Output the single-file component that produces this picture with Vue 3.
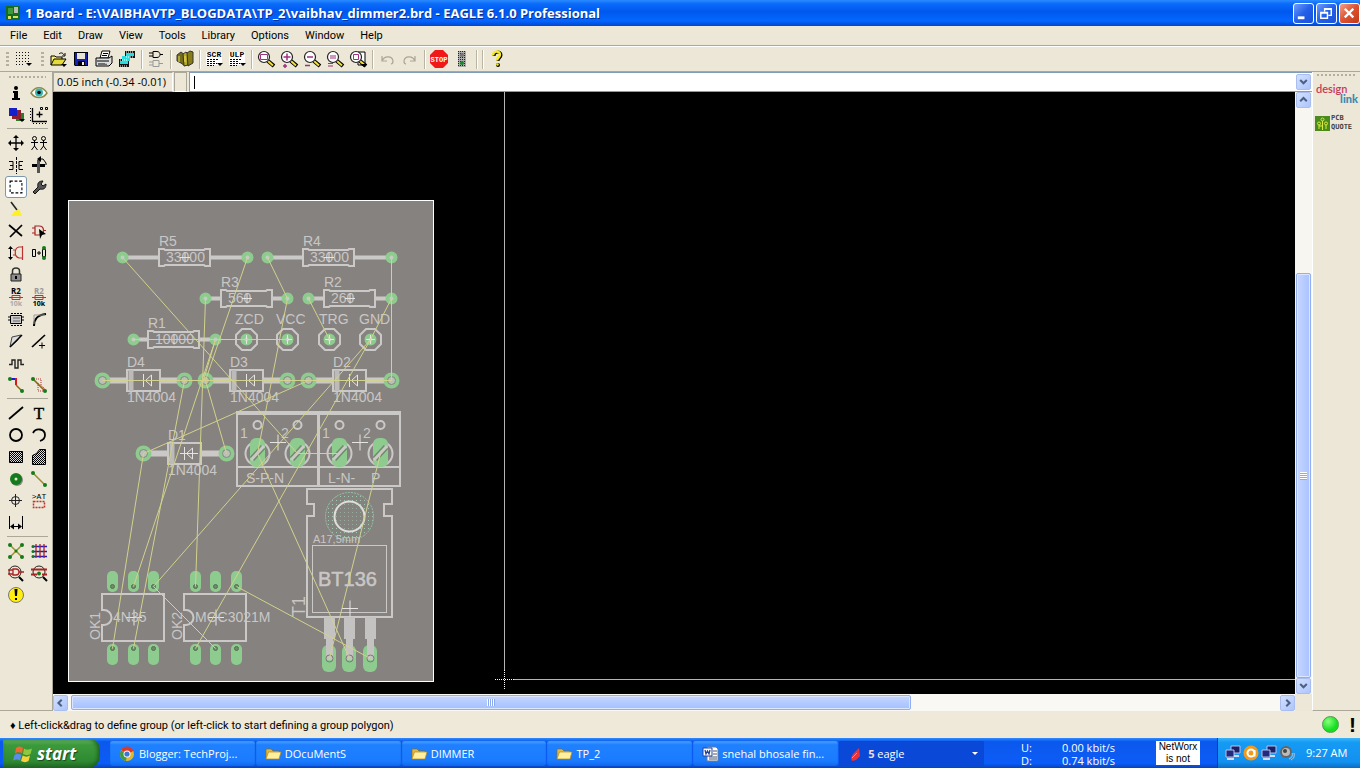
<script setup>
import { ref } from 'vue'

const command = ref('')
const menus = ['File', 'Edit', 'Draw', 'View', 'Tools', 'Library', 'Options', 'Window', 'Help']

const lens = (inner, x = 9) =>
  `<path d="M${x + 4} 13l6 5" stroke="#000" stroke-width="4"/><path d="M${x + 4} 13l5 4.500" stroke="#f3e03a" stroke-width="2"/><circle cx="${x}" cy="9" r="5.500" fill="#fff" stroke="#222" stroke-width="1.200"/>${inner}`
const page = (t) =>
  `<path d="M3 4h16v13H3z" fill="#fff"/><text x="11" y="9" font-size="8" font-weight="700" text-anchor="middle" font-family="Liberation Mono, monospace">${t}</text><path d="M4 11.500h11M4 13.500h8M4 15.500h10M4 17.500h7" stroke="#000" stroke-dasharray="2 1"/><path d="M14 15h6l-3 3z"/>`
const arc = '<path d="M6 8v5h5M6 13c2-5 10-6 11 0 0 2-1 3-2 3" fill="none" stroke="#a9a598" stroke-width="1.200"/>'
const res = (a, b) =>
  `<text x="11" y="8" font-size="8" font-weight="700" text-anchor="middle" fill="${a}">R2</text><path d="M4 11.500h14M7 9.500h8v4H7z" fill="none" stroke="#b33"/><text x="11" y="20" font-size="7" font-weight="700" text-anchor="middle" fill="${b}">10k</text>`
const ball = (x, y, r = 2) => `<circle cx="${x}" cy="${y}" r="${r}" fill="#157a1c"/>`

const art = {
  grid: '<path d="M4 4.500h14M4 7.500h14M4 10.500h14M4 13.500h14M4 16.500h9" stroke="#111" stroke-dasharray="1 2"/><path d="M14 15h6l-3 3z"/>',
  open: '<path d="M4 17V8h4l1 1h6v3" fill="#fff36b" stroke="#000"/><path d="M4 17l3-6h12l-4 6z" fill="#e5da3c" stroke="#000"/><path d="M12 6c2-2 4-1 5 1m1-2v3h-3" fill="none" stroke="#000"/><path d="M14 16h6l-3 3z"/>',
  save: '<path d="M4 4h14v14H5l-1-1z" fill="#000"/><path d="M5 5h12v12H5z" fill="#1720b0"/><path d="M7 5h8v6H7z" fill="#e8e4d4"/><path d="M8 13h7v4H8z" fill="#000"/><path d="M12 14h2v3h-2z" fill="#eee"/>',
  print: '<path d="M7 10L9 3h8l-2 7z" fill="#fff" stroke="#000"/><path d="M3 10h13l3-2v7l-3 3H3z" fill="#ddd" stroke="#000"/><path d="M10 5.500h5M9 7.500h5M4 13h12M5 16h9" stroke="#000"/><path d="M12 15h2v1h-2z" fill="#dc2"/>',
  cam: '<path d="M9 3h10v7H9zM3 11h10v8H3z" fill="#111"/><path d="M10 5h8v3h-8zM4 13h8v3H4zM6 8h8v5H6z" fill="#26dede"/><path d="M10 4h8M10 9h8M4 12h8M4 18h8" stroke="#fff" stroke-dasharray="1 1"/>',
  board: '<path d="M4 5h4M4 8h4M8 3.500h4c4 0 4 6 0 6H8zM15 6.500h3" fill="none" stroke="#000"/><path d="M8 12.500h6v6H8zM4 14h4M4 17h4M14 15.500h4" fill="none" stroke="#999"/>',
  library: '<path d="M3 7l4-3 4 3v11l-4-3-4-2z" fill="#776d18" stroke="#333"/><path d="M9 6l3-2 2 2v11l-4 1z" fill="#b7aa24" stroke="#333"/><path d="M13 5l3-2 3 1v11l-5 3z" fill="#887c18" stroke="#333"/><path d="M5 8v6m6-6v6" stroke="#e9df62"/>',
  scr: page('SCR'), ulp: page('ULP'),
  zoomfit: lens('<path d="M5.500 6.500h7v5h-7z" fill="none" stroke="#a03080"/>'),
  zoomin: lens('<path d="M9 5.500v7M5.500 9h7M5 18h4m-2-2v4" stroke="#a03080" stroke-width="1.500"/>'),
  zoomout: lens('<path d="M6 9h6M4 17.500h5" stroke="#a03080" stroke-width="1.500"/>'),
  zoomredraw: lens('<path d="M6 8h6M6 10h6M4 15.500h5M4 18h5" stroke="#a03080" stroke-width="1.200"/>'),
  zoomsel: '<path d="M11 4h7v13h-7z" fill="#fff" stroke="#000"/>' + lens('<path d="M6.500 6.500h5v5h-5z" fill="none" stroke="#a03080"/>') + '<path d="M13 16h7l-3 3z"/>',
  undo: arc,
  redo: `<g transform="translate(22 0) scale(-1 1)">${arc}</g>`,
  stop: '<path d="M7 2h8l5 5v8l-5 5H7l-5-5V7z" fill="#f01818"/><text x="11" y="14" font-size="7" font-weight="700" text-anchor="middle" fill="#fff" font-family="Liberation Mono, monospace">STOP</text>',
  traffic: '<path d="M7 3h8v16H7z" fill="#aaa"/><path d="M7.500 3v16M9.500 3v16M11.500 3v16M13.500 3v16" stroke="#222" stroke-dasharray="1 1"/><circle cx="11" cy="7" r="2" fill="#777"/><circle cx="11" cy="15" r="2" fill="#1c8a28"/>',
  help: '<path d="M8 8c0-5 7-5 7-1 0 3-3 3-3 6" fill="none" stroke="#000" stroke-width="3"/><path d="M7 7.500c0-5 7-5 7-1 0 3-3 3-3 6" fill="none" stroke="#f8ec20" stroke-width="2.500"/><circle cx="12" cy="17" r="2" fill="#000"/><circle cx="11.500" cy="16.500" r="1.300" fill="#f8ec20"/>',

  info: '<circle cx="11" cy="6" r="2"/><path d="M8 9h5v7h2v2H7v-2h2v-5H8z"/>',
  eye: '<path d="M3 11c4-7 12-7 16 0-4 6-12 6-16 0z" fill="#fff" stroke="#8b8a45" stroke-width="1.500"/><circle cx="11" cy="10.500" r="4" fill="#35b4b4"/><circle cx="11" cy="10.500" r="1.800"/>',
  layers: '<path d="M11 9h8v8h-8z" fill="#2a7c2a"/><path d="M7 6h9v9H7z" fill="#8e1f2e"/><path d="M4 4h8v8H4z" fill="#1620c8"/><path d="M14 15h6l-3 3z"/>',
  mark: '<path d="M4.500 4v13.500H19M8.500 10.500h6m-3-3v6" fill="none" stroke="#000" stroke-width="1.300"/><path d="M2.500 4v14M5 19.500h14" stroke="#000" stroke-dasharray="1 2"/><path d="M12.500 3.500h2v2h-2zM17.500 3.500h2v2h-2z" fill="none" stroke="#000"/>',
  move: '<path d="M11 4v14M4 11h14" stroke="#000" stroke-width="1.300"/><path d="M8 6l3-3 3 3zM8 16l3 3 3-3zM6 8l-3 3 3 3zM16 8l3 3-3 3z"/>',
  copy: '<g fill="none" stroke="#000"><circle cx="6.500" cy="6.500" r="2"/><circle cx="15.500" cy="6.500" r="2"/><path d="M6.500 8v6l-3 4M6.500 14l3 4M3 10.500h7M15.500 8v6l-3 4M15.500 14l3 4M12 10.500h7"/></g>',
  mirror: '<path d="M4 7.500h4v8H4M8 11.500H5M18 7.500h-4v8h4M14 11.500h3" fill="none" stroke="#000"/><path d="M11.500 3v17" stroke="#000" stroke-dasharray="3 1"/>',
  rotate: '<path d="M4 10h13v3H4z"/><path d="M9 6h3v13H9z" fill="#555"/><path d="M12 5h3l3 4v2" fill="none" stroke="#000"/><path d="M9 5l4-3v6z"/>',
  group: '<path d="M4.500 4.500h13v13h-13z" fill="none" stroke="#000" stroke-width="1.200" stroke-dasharray="3 2"/>',
  wrench: '<path d="M5 16l5-5c-1-4 1-6 5-6l-2 3 2 2 3-2c0 4-2 6-6 5l-5 5z" fill="#555" stroke="#111"/>',
  brush: '<path d="M6 4l6 8" stroke="#222" stroke-width="1.500"/><path d="M9 14l5-3 3 7H6z" fill="#ffef26"/>',
  del: '<path d="M4 5l13 11M17 5L5 17" stroke="#000" stroke-width="1.700"/>',
  add: '<path d="M7 6h4c6 0 6 9 0 9H7zM4 8h3M4 13h3M15 10.500h3" fill="none" stroke="#a22" stroke-width="1.200"/><path d="M11 9l7 5-4 1-2 4z"/>',
  pinswap: '<path d="M5.500 6v11" fill="none" stroke="#000"/><path d="M3 7l2.500-3L8 7zM3 15l2.500 3L8 15z"/><path d="M18 5h-4c-5 1-5 10 0 11h4M10 8H8M10 13H8M17.500 4v14" fill="none" stroke="#b33" stroke-width="1.200"/>',
  replace: '<path d="M4.500 7.500h3v7h-3zM14.500 7.500h3v7h-3zM9 11h4m-2-2v4" fill="none" stroke="#000"/>' + ball(16, 6) + ball(16, 16),
  lock: '<path d="M7.500 11V7c0-4 7-4 7 0v4" fill="none" stroke="#333" stroke-width="1.500"/><path d="M6 10h10v7H6z" fill="#8c8c8c" stroke="#222"/><path d="M10 12h2v3h-2z"/>',
  name: res('#000', '#aaa'), value: res('#999', '#000'),
  smash: '<path d="M5.500 7.500h11v8h-11z" fill="#ccc" stroke="#000"/><path d="M6 5.500h11M6 17.500h11M4 8v6M18 8v6" stroke="#000" stroke-dasharray="2 1"/><path d="M8 10h7M8 13h7" stroke="#666"/>',
  miter: '<path d="M6 18c0-7 3-11 12-12" fill="none" stroke="#000" stroke-width="2"/><path d="M6 16V7h11" fill="none" stroke="#999"/>',
  split: '<path d="M5 17L7 7l9-2-4 6z" fill="#ddd" stroke="#444"/><path d="M5 17L17 5" stroke="#000" stroke-width="1.500"/>',
  optimize: '<path d="M4 17L17 5" stroke="#000" stroke-width="1.700"/><path d="M11 15.500h6m-3-3v6" stroke="#000"/>',
  meander: '<path d="M4 12.500h3V8h3v8h3V8h3v4.500h3" fill="none" stroke="#222" stroke-width="1.400"/>',
  route: '<path d="M5 5h6" stroke="#1818d8" stroke-width="2"/><path d="M11 4v7" stroke="#d81818" stroke-width="2"/><path d="M11 11l6 6" stroke="#8a6a18" stroke-width="1.500"/>' + ball(5, 5) + ball(17, 17),
  ripup: '<path d="M5 5l12 12" stroke="#8a6a18" stroke-width="1.700"/><path d="M8 5h5v6l4 4M10 9v8h8" fill="none" stroke="#b33" stroke-dasharray="1 1"/>' + ball(5, 5) + ball(17, 17),
  wire: '<path d="M4 17L18 5" stroke="#000" stroke-width="1.800"/>',
  text: '<text x="11" y="17" font-size="17" text-anchor="middle" stroke="#000" stroke-width=".4" font-family="Liberation Serif, serif">T</text>',
  circle: '<circle cx="11" cy="11" r="6" fill="none" stroke="#000" stroke-width="1.800"/>',
  arc: '<path d="M5 9c3-6 12-4 12 2 0 3-2 5-5 6" fill="none" stroke="#000" stroke-width="1.800"/>',
  rect: '<path d="M4.500 5.500h13v11h-13z" fill="url(#hatch)" stroke="#000"/>',
  polygon: '<path d="M4.500 18.500v-9l4-2 3-4h6v15z" fill="url(#hatch)" stroke="#000"/>',
  via: '<circle cx="12" cy="12" r="6" fill="#888"/><circle cx="11" cy="11" r="6" fill="#157a1c"/><circle cx="11" cy="11" r="1.500" fill="#dce8d0"/>',
  signal: '<path d="M5 5l12 12" stroke="#9c8a30" stroke-width="1.500"/>' + ball(5, 5) + ball(17, 17),
  hole: '<circle cx="10.500" cy="10.500" r="4" fill="none" stroke="#222"/><path d="M10.500 4v13M4 10.500h13" stroke="#222"/>',
  attr: '<text x="11" y="9" font-size="8" text-anchor="middle" font-family="Liberation Mono, monospace">&gt;AT</text><path d="M5.500 11.500h11v6h-11z" fill="none" stroke="#b33" stroke-width="1.500" stroke-dasharray="2 1"/>',
  dimension: '<path d="M4.500 4v13M17.500 4v13M6 14.500h10" stroke="#000"/><path d="M5 14.500l4-3v6zM17 14.500l-4-3v6z"/>',
  ratsnest: '<path d="M5 5l12 12M17 5L5 17" stroke="#9c9430" stroke-width="1.500"/>' + ball(5, 5) + ball(17, 5) + ball(5, 17) + ball(17, 17) + ball(11, 11, 1.5),
  auto: '<path d="M4 6.500h15M4 11.500h15M4 16.500h15" stroke="#1818d8" stroke-width="1.700"/><path d="M8 4v14M12 4v14M16 4v14" stroke="#a22" stroke-width="1.300"/>' + ball(5, 6.5, 1.5) + ball(5, 11.5, 1.5) + ball(5, 16.5, 1.5),
  erc: '<circle cx="10" cy="10" r="6" fill="none" stroke="#222"/><path d="M14 15l4 4" stroke="#000" stroke-width="2"/><path d="M8 7h3c4 0 4 6 0 6H8zM3 8h5M3 12h5M14 10h5" fill="none" stroke="#a22" stroke-width="1.300"/>',
  drc: '<circle cx="11" cy="10" r="6" fill="none" stroke="#222"/><path d="M15 15l4 4" stroke="#000" stroke-width="2"/><path d="M3 7.500h16M3 12.500h6m5 0h5" stroke="#a22" stroke-width="2"/>' + ball(11, 11.5),
  errors: '<circle cx="11" cy="11" r="7.500" fill="#ffee10" stroke="#777"/><path d="M9.500 5h3l-.5 7h-2zM10 14h2v2h-2z"/>'
}

const tools = ['open', 'save', 'print', 'cam', '|', 'board', '|', 'library', '|', 'scr', 'ulp', '|', 'zoomfit', 'zoomin', 'zoomout', 'zoomredraw', 'zoomsel', '|', 'undo', 'redo', '|', 'stop', 'traffic', '|', '|', 'help']
const palette = [
  'info', 'eye', 'layers', 'mark', '|',
  'move', 'copy', 'mirror', 'rotate', 'group', 'wrench', 'brush', '', 'del', 'add', 'pinswap', 'replace', 'lock', '',
  'name', 'value', 'smash', 'miter', 'split', 'optimize', 'meander', '', 'route', 'ripup', '|',
  'wire', 'text', 'circle', 'arc', 'rect', 'polygon', 'via', 'signal', 'hole', 'attr', 'dimension', '', '|',
  'ratsnest', 'auto', 'erc', 'drc', 'errors', ''
]

const resistors = [
  { n: 'R5', v: '33000', y: 257, a: 122, b: 247, l: 159 },
  { n: 'R4', v: '33000', y: 257, a: 267, b: 391, l: 303 },
  { n: 'R3', v: '560', y: 298, a: 205, b: 287, l: 221 },
  { n: 'R2', v: '260', y: 298, a: 308, b: 391, l: 324 },
  { n: 'R1', v: '10000', y: 339, a: 133, b: 215, l: 148 }
]
const headers = [['ZCD', 246, 235], ['VCC', 287, 276], ['TRG', 329, 319], ['GND', 370, 359]]
const diodes = [
  { n: 'D4', a: 102, b: 184, l: 127, y: 380 },
  { n: 'D3', a: 205, b: 287, l: 230, y: 380 },
  { n: 'D2', a: 308, b: 391, l: 333, y: 380 },
  { n: 'D1', a: 143, b: 226, l: 168, y: 453 }
]
const terminals = [237, 319]
const screws = [257, 297, 339, 380]
const optos = [
  { n: 'OK1', v: '4N35', x: 102, pins: [112, 133, 153] },
  { n: 'OK2', v: 'MOC3021M', x: 184, pins: [195, 215, 236] }
]
const legs = [329, 349, 370]
const wires = [
  [122, 257, 297, 453], [247, 257, 205, 380], [205, 298, 195, 586], [215, 339, 133, 586], [215, 339, 203, 380],
  [184, 380, 133, 648], [205, 380, 226, 453], [308, 380, 143, 453], [143, 453, 112, 648], [102, 380, 391, 380],
  [133, 339, 287, 339], [267, 257, 287, 298], [287, 298, 257, 453], [308, 298, 329, 339], [391, 257, 391, 380],
  [391, 298, 370, 339], [370, 339, 153, 586], [370, 339, 195, 648], [297, 453, 339, 453], [257, 453, 349, 658],
  [380, 453, 329, 658], [236, 586, 370, 658], [153, 586, 215, 648]
]

const tasks = [
  { icon: 'chrome', label: 'Blogger: TechProj...' },
  { icon: 'folder', label: 'DOcuMentS' },
  { icon: 'folder', label: 'DIMMER' },
  { icon: 'folder', label: 'TP_2' },
  { icon: 'word', label: 'snehal bhosale fin...' },
  { icon: 'eagle', count: '5', label: 'eagle' }
]
const taskArt = {
  chrome: '<circle cx="8" cy="8" r="7" fill="#e3b92c"/><path d="M8 8L2 4a7 7 0 0 1 12.500 1z" fill="#d83a2c"/><path d="M8 8l-1 7A7 7 0 0 1 2 4.500z" fill="#3c9a48"/><circle cx="8" cy="8" r="3.500" fill="#fff"/><circle cx="8" cy="8" r="2.600" fill="#3d74d8"/>',
  folder: '<path d="M1 13V3h5l2 2h6v8z" fill="#e3b93c" stroke="#8a6a18" stroke-width=".7"/><path d="M1 13l2.500-7H16l-2 7z" fill="#fff0a0" stroke="#b08a28" stroke-width=".7"/>',
  word: '<path d="M5 1h9l2 2v12H5z" fill="#fff" stroke="#6a7a9a"/><path d="M11 5h4M11 8h4M7 11h8M7 13h8" stroke="#456"/><path d="M1 2h9v8H1z" fill="#fff" stroke="#24439a"/><path d="M3 4l1 4 1.500-3L7 8l1-4" fill="none" stroke="#24439a" stroke-width="1.300"/>',
  eagle: '<path d="M3 12L5 8l6-6 1 8-4 4-4 1z" fill="#e8333a"/><path d="M4 12l5-5" stroke="#ff8a80"/>'
}
const monitors = '<path d="M6 1h9v7H6z" fill="#1b1f66" stroke="#b8c4ee"/><path d="M1 5h8v7H1z" fill="#23297c" stroke="#b8c4ee"/><path d="M2 14h7M9 11h5" stroke="#d4dcf4" stroke-width="2"/>'
const trayArt = [
  ['Network', monitors],
  ['Avast', '<circle cx="8" cy="8" r="7.500" fill="#f19a1c"/><circle cx="8" cy="8" r="3.500" fill="none" stroke="#fff" stroke-width="2"/><path d="M11.500 5v6.500" stroke="#fff" stroke-width="2"/>'],
  ['Network 2', monitors],
  ['Volume', '<circle cx="7" cy="7" r="6" fill="#666"/><circle cx="7" cy="7" r="4" fill="#bbb"/><circle cx="6" cy="6" r="2" fill="#444"/><path d="M13 8c1 2 0 5-3 6M15 8c1 4-1 6-3 7" fill="none" stroke="#bcd"/>']
]
</script>

<template>
  <div class="window">
    <svg class="defs" width="0" height="0" aria-hidden="true">
      <pattern id="hatch" width="2" height="2" patternUnits="userSpaceOnUse">
        <rect width="2" height="2" fill="#ddd" /><rect width="1" height="1" /><rect x="1" y="1" width="1" height="1" />
      </pattern>
    </svg>

    <header class="title">
      <svg class="app-icon" viewBox="0 0 16 16" aria-hidden="true">
        <path d="M1 1h14v14H1z" fill="#166b22" /><path d="M3 3h5v6H3z" fill="#3d9a3c" /><path d="M9 2h4v6H9z" fill="#bbb" />
        <path d="M3 11h3v3H3zM8 11h5v2H8z" fill="#d8e060" /><path d="M2 10.500h11" stroke="#071" />
      </svg>
      <h1>1 Board - E:\VAIBHAVTP_BLOGDATA\TP_2\vaibhav_dimmer2.brd - EAGLE 6.1.0 Professional</h1>
      <button class="win-btn" aria-label="Minimize"><svg viewBox="0 0 20 20"><path d="M4 13h7v3H4z" fill="#fff" /></svg></button>
      <button class="win-btn" aria-label="Restore"><svg viewBox="0 0 20 20"><path d="M8 8V5h7v7h-3M4 9h7v6H4zM8 5.500h7M4 9.500h7" fill="none" stroke="#fff" stroke-width="1.500" /></svg></button>
      <button class="win-btn close" aria-label="Close"><svg viewBox="0 0 20 20"><path d="M5 5l9 9M14 5l-9 9" stroke="#fff" stroke-width="2.500" /></svg></button>
    </header>

    <nav class="menu"><button v-for="m in menus" :key="m">{{ m }}</button></nav>

    <div class="toolbar" role="toolbar" aria-label="Actions">
      <i class="grip"></i>
      <button class="tool first" aria-label="grid"><svg viewBox="0 0 22 22" v-html="art.grid"></svg></button>
      <i class="grip second"></i>
      <template v-for="(t, i) in tools" :key="i">
        <i v-if="t === '|'" class="sep"></i>
        <button v-else class="tool" :aria-label="t"><svg viewBox="0 0 22 22" v-html="art[t]"></svg></button>
      </template>
    </div>

    <main class="work">
      <aside class="palette">
        <i class="dots"></i>
        <div class="palette-grid">
          <template v-for="(t, i) in palette" :key="i">
            <i v-if="t === '|'" class="rule"></i>
            <span v-else-if="!t"></span>
            <button v-else :class="{ on: t === 'group' }" :aria-label="t"><svg viewBox="0 0 22 22" v-html="art[t]"></svg></button>
          </template>
        </div>
      </aside>

      <section class="editor">
        <div class="command">
          <output class="coords">0.05 inch (-0.34 -0.01)</output>
          <span class="slot"></span>
          <div class="entry">
            <input v-model="command" aria-label="Command" />
            <i class="caret"></i>
            <button class="sb" aria-label="Command history"><svg viewBox="0 0 15 17"><path d="M3.500 6l4 4 4-4" /></svg></button>
          </div>
        </div>

        <div class="view">
          <svg class="canvas" role="img" aria-label="Board layout">
            <defs>
              <pattern id="copper" width="4" height="4" patternUnits="userSpaceOnUse"><rect width="1" height="1" fill="#a3c8b0" /></pattern>
            </defs>
            <g class="board" transform="translate(-53 -92)">
              <rect x="68.500" y="200.500" width="365" height="481" fill="#86827f" stroke="#fff" />

              <g v-for="r in resistors" :key="r.n">
                <path :d="`M${r.a} ${r.y + .5}H${r.l}M${r.l + 51} ${r.y + .5}H${r.b}`" class="lead" />
                <circle :cx="r.a + .5" :cy="r.y + .5" r="4" class="ring" />
                <circle :cx="r.b + .5" :cy="r.y + .5" r="4" class="ring" />
                <path :d="`M${r.l} ${r.y - 8}h5l1 1h39l1 -1h5v17h-5l-1 -1h-39l-1 1h-5z`" class="silk" />
                <text :x="r.l" :y="r.y - 11">{{ r.n }}</text>
                <text :x="r.l + 7" :y="r.y + 5">{{ r.v }}</text>
                <path :d="`M${r.l + 21} ${r.y + .5}h10m-5 -5v10`" class="origin" />
              </g>

              <g v-for="h in headers" :key="h[0]">
                <path :d="`M${h[1] - 4} 329h9l6 6v9l-6 6h-9l-6 -6v-9z`" class="silk" />
                <circle :cx="h[1] + .5" cy="339.500" r="4" class="ring" />
                <path :d="`M${h[1] - 4} 339.500h9m-4.500 -4.500v9`" class="origin" />
                <text :x="h[2]" y="324">{{ h[0] }}</text>
              </g>

              <g v-for="d in diodes" :key="d.n">
                <path :d="`M${d.a} ${d.y + .5}H${d.l}M${d.l + 33} ${d.y + .5}H${d.b}`" class="lead thick" />
                <circle :cx="d.a + .5" :cy="d.y + .5" r="6" class="ring wide" />
                <circle :cx="d.b + .5" :cy="d.y + .5" r="6" class="ring wide" />
                <circle :cx="d.a + .5" :cy="d.y + .5" r="4" class="bore" />
                <circle :cx="d.b + .5" :cy="d.y + .5" r="4" class="bore" />
                <path :d="`M${d.l} ${d.y - 10}h33v21h-33z`" class="silk" />
                <path :d="`M${d.l + 4} ${d.y - 10}v21`" class="band" />
                <path :d="`M${d.l + 12} ${d.y + .5}h18M${d.l + 16.500} ${d.y - 6}v13M${d.l + 24.500} ${d.y - 5}v11l-6 -5.500z`" class="symbol" />
                <text :x="d.l" :y="d.y - 13">{{ d.n }}</text>
                <text :x="d.l" :y="d.y + 22">1N4004</text>
              </g>

              <g v-for="x in terminals" :key="x">
                <rect :x="x" y="412" width="81" height="74" class="silk" />
                <path :d="`M${x} 413h81`" stroke="#cbc9c8" stroke-width="4" />
                <path :d="`M${x} 467h81`" class="silk" />
                <text :x="x + 3" y="438">1</text>
                <text :x="x + 44" y="438">2</text>
                <path :d="`M${x + 33} 442.500h16m-8 -8v16`" class="origin" />
              </g>
              <text x="246" y="483">S-P-N</text>
              <text x="328" y="483">L-N-</text>
              <text x="371" y="483">P</text>
              <g v-for="x in screws" :key="x">
                <circle :cx="x + .5" cy="425" r="4" class="silk" />
                <circle :cx="x + .5" cy="453.500" r="12" class="silk" />
                <rect :x="x - 7" y="438" width="15" height="29" rx="6" class="pad" />
                <path :d="`M${x - 5} 459l11 -12`" stroke="#6f8b6c" stroke-width="6" />
                <path :d="`M${x - 6} 460l13 -14`" stroke="#cbc9c8" stroke-width="3" />
              </g>

              <path d="M307 489h85v15h-8v12h8v101h-85v-101h7v-12h-7z" class="silk" />
              <rect x="312.500" y="545.500" width="74" height="67" class="silk thin" />
              <circle cx="349.500" cy="516.500" r="24" fill="url(#copper)" stroke="#91c3a2" stroke-dasharray="2 1" />
              <circle cx="349.500" cy="516.500" r="15" fill="#86827f" fill-opacity=".4" stroke="#e0dedd" stroke-width="2" />
              <path d="M342 608.500h16m-8 -8v16" class="origin" />
              <text x="313" y="543" class="small">A17,5mm</text>
              <text x="318" y="586" class="part">BT136</text>
              <text transform="translate(305 617) rotate(-90)" class="mid">T1</text>
              <g v-for="x in legs" :key="x">
                <rect :x="x - 7" y="645" width="14" height="27" rx="6" class="pad" />
                <path :d="`M${x - 5} 617h11v22h-2v21h-7v-21h-2z`" fill="#c5c3c2" />
                <circle :cx="x + .5" cy="658.500" r="3.500" fill="none" stroke="#7a7774" />
              </g>

              <g v-for="o in optos" :key="o.n">
                <g v-for="p in o.pins" :key="p">
                  <rect :x="p - 5" y="571" width="11" height="21" rx="5" class="pad" />
                  <rect :x="p - 5" y="644" width="11" height="21" rx="5" class="pad" />
                  <circle :cx="p + .5" cy="586.500" r="2" class="drill" />
                  <circle :cx="p + .5" cy="648.500" r="2" class="drill" />
                </g>
                <path :d="`M${o.x} 594h62v47h-62v-16h2a7 7 0 0 0 0 -15h-2z`" class="silk" />
                <path :d="`M${o.x + 24} 617.500h16m-8 -8v16`" class="origin" />
                <text :x="o.x + 11" y="622">{{ o.v }}</text>
                <text :transform="`translate(${o.x - 2} 640) rotate(-90)`">{{ o.n }}</text>
              </g>

              <g class="air">
                <line v-for="(w, i) in wires" :key="i" :x1="w[0] + .5" :y1="w[1] + .5" :x2="w[2] + .5" :y2="w[3] + .5" />
              </g>
              <path d="M504.500 92V670M514 679.500H4000" stroke="#b4b4b4" />
              <path d="M504.500 670v19M495 679.500h19" stroke="#fff" stroke-dasharray="1 1" />
            </g>
          </svg>
          <div class="vbar">
            <button class="sb" aria-label="Scroll up"><svg viewBox="0 0 15 17"><path d="M3.500 10l4-4 4 4" /></svg></button>
            <div class="vtrack"><div class="vthumb"><i></i></div></div>
            <button class="sb" aria-label="Scroll down"><svg viewBox="0 0 15 17"><path d="M3.500 6l4 4 4-4" /></svg></button>
          </div>
        </div>

        <div class="hbar">
          <button class="sb" aria-label="Scroll left"><svg viewBox="0 0 15 17"><path d="M9 4.500l-4 4 4 4" /></svg></button>
          <div class="htrack"><div class="hthumb"><i></i></div></div>
          <button class="sb" aria-label="Scroll right"><svg viewBox="0 0 15 17"><path d="M6 4.500l4 4-4 4" /></svg></button>
        </div>
      </section>

      <aside class="links">
        <i class="dots"></i>
        <a href="#" class="design"><span>design</span><b>link</b></a>
        <a href="#" class="quote">
          <svg viewBox="0 0 15 15" aria-hidden="true">
            <rect width="15" height="15" fill="#4b8a1c" /><path d="M4 13V8M7.500 14V4M11 13V8M4 10h3" stroke="#d8ec40" fill="none" />
            <g fill="#4b8a1c" stroke="#d8ec40"><circle cx="4" cy="7.500" r="1.500" /><circle cx="7.500" cy="3.500" r="1.500" /><circle cx="11" cy="7.500" r="1.500" /></g>
          </svg>
          <span>PCB<br />QUOTE</span>
        </a>
      </aside>
    </main>

    <footer class="status">
      <p>♦ Left-click&amp;drag to define group (or left-click to start defining a group polygon)</p>
      <i class="led"></i>
      <b>!</b>
    </footer>

    <div class="taskbar">
      <button class="start">
        <svg viewBox="0 0 20 20" aria-hidden="true">
          <path d="M3 4c2-2 4-2 7 0L9 9.500c-3-2-5-1-7 0z" fill="#ee6a2e" /><path d="M11 4.500c3 2 5 1 8 0L17.500 10c-2 1.500-5 1.500-7.500 0z" fill="#8fc73e" />
          <path d="M1.500 11c2-2 4.500-1.500 7 0l-1.500 5.500c-2-1.500-4-1.500-7 0z" fill="#5a8ee8" /><path d="M9.700 11.500c2.500 1.500 5 1.500 7.300 0L15.500 17c-2 1.500-5 1.500-7.500 0z" fill="#f8d13c" />
        </svg>
        <span>start</span>
      </button>
      <div class="tasks">
        <button v-for="t in tasks" :key="t.label" class="task" :class="{ active: t.count }">
          <svg viewBox="0 0 17 16" aria-hidden="true" v-html="taskArt[t.icon]"></svg>
          <span><b v-if="t.count">{{ t.count }}&nbsp;</b>{{ t.label }}</span>
          <i v-if="t.count" class="arrow"></i>
        </button>
      </div>
      <dl class="net"><dt>U:</dt><dd>0.00 kbit/s</dd><dt>D:</dt><dd>0.74 kbit/s</dd></dl>
      <div class="networx">NetWorx is not</div>
      <div class="tray">
        <svg v-for="t in trayArt" :key="t[0]" viewBox="0 0 16 16" role="img" :aria-label="t[0]" v-html="t[1]"></svg>
        <time>9:27 AM</time>
      </div>
    </div>
  </div>
</template>

<style>
body { margin: 0; background: #ece9d8; }
</style>

<style scoped>
* { box-sizing: border-box; }
.window {
  display: flex;
  flex-direction: column;
  height: 100vh;
  min-height: 700px;
  overflow: hidden;
  background: #ece7d6;
  color: #000;
  font: 11px/14px "Open Sans", "Noto Sans", sans-serif;
}
.defs { position: absolute; }
button { padding: 0; border: 0; background: none; font: inherit; color: inherit; }
svg { display: block; }
.title {
  display: flex;
  align-items: center;
  gap: 2px;
  height: 26px;
  flex: none;
  padding-left: 5px;
  background: linear-gradient(#2b8bff, #0a6bfa 15%, #0058ee 45%, #0566ff 80%, #0046cc);
}
.app-icon { width: 16px; height: 16px; }
h1 {
  flex: 1;
  margin: 0 0 0 2px;
  font: bold 13px/18px "Open Sans", "Noto Sans", sans-serif;
  color: #fff;
  text-shadow: 1px 1px 0 #0a2f92;
  white-space: nowrap;
}
.win-btn {
  width: 21px;
  height: 21px;
  border: 1px solid #fff;
  border-radius: 3px;
  background: linear-gradient(135deg, #6f9dfb, #2460e8 50%, #1c50d8);
}
.close { background: linear-gradient(135deg, #f2a088, #dd5030 50%, #c23a18); }
.menu {
  display: flex;
  height: 20px;
  flex: none;
  padding-left: 2px;
  border-bottom: 1px solid #aca899;
}
.menu button { padding: 1px 8px 0; }
.menu, .status { font-family: Roboto, "Liberation Sans", sans-serif; }
.toolbar {
  display: flex;
  align-items: center;
  height: 26px;
  flex: none;
  padding-left: 6px;
  border-top: 1px solid #fff;
  border-bottom: 1px solid #aca899;
}
.tool { width: 23px; height: 23px; flex: none; }
.tool svg { width: 22px; height: 22px; }
.first { margin-left: 3px; }
.sep { width: 6px; height: 19px; flex: none; border-left: 2px solid transparent; background: linear-gradient(90deg, #b9b5a4 1px, #fff 1px 2px, transparent 2px); background-clip: padding-box; }
.grip { width: 3px; height: 15px; background: repeating-linear-gradient(#b4b0a0 0 2px, transparent 2px 4px); }
.second { margin: 0 3px 0 6px; }
.work { display: flex; flex: 1; min-height: 0; }
.palette { width: 53px; flex: none; padding: 4px 3px 0 5px; border-right: 1px solid #aca899; border-bottom: 1px solid #aca899; }
.dots { display: block; height: 2px; margin: 0 3px 4px 4px; background: repeating-linear-gradient(90deg, #b4b0a0 0 2px, transparent 2px 4px); }
.palette-grid { display: grid; grid-template-columns: 23px 23px; grid-auto-rows: minmax(6px, auto); }
.palette-grid > span { height: 22px; }
.palette-grid button { width: 22px; height: 22px; }
.palette-grid svg { width: 22px; height: 22px; }
.palette-grid .on { border: 1px solid #7a98af; border-radius: 3px; background: #fff; }
.palette-grid .on svg { width: 20px; height: 20px; }
.rule { grid-column: 1 / 3; height: 1px; margin: 2px 3px 3px 2px; background: #aca899; }
.editor { display: flex; flex-direction: column; flex: 1; min-width: 0; }
.command { display: flex; height: 20px; flex: none; }
.coords { width: 120px; padding: 2px 0 0 3px; border: 1px solid #aca899; border-right-color: #fff; white-space: nowrap; }
.slot { width: 13px; margin: 0 2px 0 1px; border: 1px solid #aca899; border-bottom-color: #fff; }
.entry { position: relative; display: flex; flex: 1; padding: 1px 1px 1px 0; border: 1px solid #7f9db9; border-right: 0; background: #fff; }
.entry input { flex: 1; min-width: 0; padding: 0 4px; border: 0; outline: 0; font: inherit; background: transparent; }
.caret { position: absolute; left: 4px; top: 3px; width: 1px; height: 13px; background: #000; }
.view { display: flex; flex: 1; min-height: 0; }
.canvas { flex: 1; width: 100%; min-width: 0; height: 100%; background: #000; }
.board text { font: 14px "Liberation Sans", Arial, sans-serif; fill: #c9c7c6; }
.board .small { font-size: 11px; }
.board .mid { font-size: 18px; }
.board .part { font-size: 20px; stroke: #c9c7c6; stroke-width: .5; }
.silk { fill: none; stroke: #cbc9c8; stroke-width: 2; }
.thin { stroke-width: 1; }
.lead { stroke: #cbc9c8; stroke-width: 4; }
.thick { stroke-width: 6; }
.ring { fill: #c2cdbf; stroke: #8ecb8f; stroke-width: 4; }
.wide { fill: #bcc0b8; }
.bore { fill: none; stroke: #7f8a7c; }
.pad { fill: #8ecb8f; }
.drill { fill: #6f8b6c; stroke: #55704f; }
.band { stroke: #bdbbba; stroke-width: 5; }
.symbol, .origin { fill: none; stroke: #e6e4e3; stroke-width: 1; }
.air { stroke: #d2d28c; stroke-width: 1; }
.vbar { display: flex; flex-direction: column; width: 17px; flex: none; padding: 0 1px; background: #f7f6f1; }
.sb { width: 15px; height: 16px; flex: none; border: 1px solid #a9bdf0; border-radius: 2px; background: linear-gradient(135deg, #d3e0ff, #aec5fb); }
.sb svg { width: 13px; height: 14px; }
.sb path { fill: none; stroke: #4a6185; stroke-width: 2.500; }
.vtrack { flex: 1; display: flex; flex-direction: column; justify-content: flex-end; }
.vthumb, .hthumb { display: grid; place-items: center; border: 1px solid #92aeee; border-radius: 2px; box-shadow: inset 0 0 0 1px #dce6ff; }
.vthumb { height: 71%; background: linear-gradient(90deg, #c6d6ff, #a9c3ff); }
.vthumb i { width: 7px; height: 8px; background: repeating-linear-gradient(#fff 0 1px, #8caaf0 1px 2px); }
.hbar { display: flex; height: 17px; flex: none; margin-right: 17px; padding: 1px 0; background: #f9f8f4; }
.htrack { flex: 1; display: flex; padding-left: 3px; }
.hthumb { width: 69.5%; background: linear-gradient(#c6d6ff, #a3c0ff); }
.hthumb i { width: 8px; height: 7px; background: repeating-linear-gradient(90deg, #fff 0 1px, #8caaf0 1px 2px); }
.links { width: 48px; flex: none; padding-top: 2px; border-left: 1px solid #fff; border-bottom: 1px solid #aca899; }
.design { display: grid; padding: 4px 2px 0 3px; font: 600 11px/10px Lato, "Open Sans", sans-serif; text-decoration: none; }
.design span { color: #c8375c; }
.design b { justify-self: end; color: #3f88b0; }
.quote { display: flex; gap: 1px; margin-top: 10px; padding-left: 2px; color: #444; text-decoration: none; font: bold 7px/9px "DejaVu Sans Mono", monospace; }
.quote svg { width: 15px; height: 15px; margin-top: 2px; }
.status { display: flex; align-items: center; height: 27px; flex: none; padding-left: 10px; background: #eee9d9; }
.status p { flex: 1; margin: 2px 0 0; white-space: nowrap; }
.led { width: 17px; height: 17px; margin-right: 10px; border: 1px solid #4d9a4d; border-radius: 50%; background: radial-gradient(circle at 35% 30%, #8bff7e, #14e020 60%); }
.status b { width: 11px; font: bold 21px/20px "Liberation Sans", sans-serif; }
.taskbar {
  display: flex;
  align-items: stretch;
  height: 30px;
  flex: none;
  color: #fff;
  background: linear-gradient(#2f8cff, #0a58ee 12%, #0d5af0 45%, #0a5cf8 85%, #0a41b8);
}
.start {
  display: flex;
  align-items: center;
  gap: 4px;
  width: 97px;
  flex: none;
  margin: 1px 10px 0 3px;
  padding-left: 10px;
  border-radius: 0 10px 12px 0;
  background: linear-gradient(#6cbb68, #3c9a3c 20%, #2f8a32 75%, #226b26);
  box-shadow: inset -2px 0 4px #1a5a1e;
}
.start svg { width: 20px; height: 20px; }
.start span { font: italic bold 17px/24px "Open Sans", sans-serif; text-shadow: 1px 1px 1px #184a18; }
.tasks { display: flex; flex: 1; max-width: 875px; }
.task {
  display: flex;
  align-items: center;
  gap: 3px;
  flex: 1;
  min-width: 0;
  margin: 3px 1px 2px 0;
  padding: 0 6px 0 9px;
  border-radius: 2px;
  background: linear-gradient(#4aa4ff, #1f80ff 15%, #1a7bff 80%, #1268ec);
  box-shadow: inset 0 0 1px #0c48c0;
  white-space: nowrap;
  text-align: left;
}
.task svg { width: 17px; height: 16px; flex: none; }
.active { background: #0a48d8; }
.task b { color: #f0dcd4; }
.arrow { margin-left: auto; border: 3px solid transparent; border-top-color: #fff; border-bottom: 0; }
.net { display: grid; grid-template-columns: 41px 62px; margin: 3px 0 0 36px; line-height: 13px; align-content: start; }
.net dd { margin: 0; white-space: nowrap; }
.networx { width: 44px; height: 24px; flex: none; margin: 3px 17px 0 auto; background: #fff; color: #000; font: 10px/12px "Liberation Sans", sans-serif; text-align: center; }
.tray { display: flex; align-items: center; gap: 2px; width: 143px; flex: none; padding-left: 7px; border-left: 1px solid #0a3f9a; background: linear-gradient(#3ab4f8, #159bf4 15%, #1290f0 80%, #0c6cc0); }
.tray svg { width: 16px; height: 16px; }
.tray time { margin-left: 9px; white-space: nowrap; }
</style>
